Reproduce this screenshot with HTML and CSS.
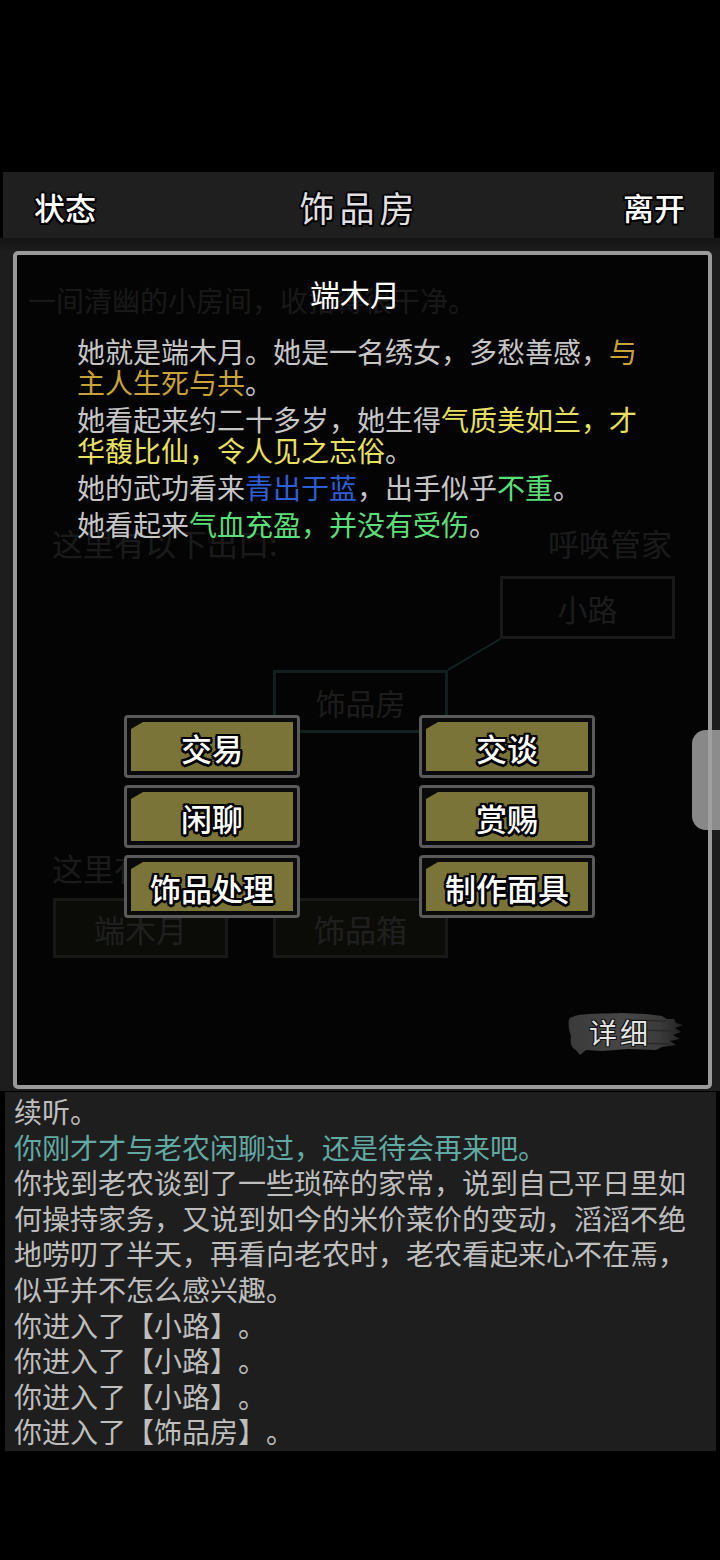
FILE: index.html
```html
<!DOCTYPE html>
<html lang="zh-CN">
<head>
<meta charset="utf-8">
<title>饰品房</title>
<link rel="stylesheet" href="styles.css">
</head>
<body>
<div class="screen">
  <header class="topbar">
    <span class="bar-btn">状态</span>
    <span class="bar-title">饰品房</span>
    <span class="bar-btn">离开</span>
  </header>

  <main class="main">
    <section class="scene">
      <p class="scene-desc">一间清幽的小房间，收拾得很干净。</p>
      <div class="scene-row exits-head">
        <span>这里有以下出口:</span>
        <span>呼唤管家</span>
      </div>
      <div class="map">
        <svg class="map-link" width="720" height="170" viewBox="0 0 720 170">
          <line x1="448" y1="107" x2="500" y2="76" stroke="#7ae8e0" stroke-width="2"/>
        </svg>
        <div class="node node-road">小路</div>
        <div class="node node-here">饰品房</div>
      </div>
      <div class="scene-row people-head">
        <span>这里有以下人物:</span>
      </div>
      <div class="people">
        <div class="person">端木月</div>
        <div class="person">饰品箱</div>
      </div>
    </section>

    <div class="dialog">
      <h1 class="dlg-title">端木月</h1>
      <div class="dlg-body">
        <p>她就是端木月。她是一名绣女，多愁善感，<span class="c-gold">与主人生死与共</span>。</p>
        <p>她看起来约二十多岁，她生得<span class="c-yellow">气质美如兰，才华馥比仙，令人见之忘俗</span>。</p>
        <p>她的武功看来<span class="c-blue">青出于蓝</span>，出手似乎<span class="c-green">不重</span>。</p>
        <p>她看起来<span class="c-green">气血充盈，并没有受伤</span>。</p>
      </div>
      <div class="actions">
        <button class="act"><span class="act-fill">交易</span></button>
        <button class="act"><span class="act-fill">交谈</span></button>
        <button class="act"><span class="act-fill">闲聊</span></button>
        <button class="act"><span class="act-fill">赏赐</span></button>
        <button class="act"><span class="act-fill">饰品处理</span></button>
        <button class="act"><span class="act-fill">制作面具</span></button>
      </div>
      <button class="detail">
        <svg class="brush" width="118" height="48" viewBox="0 0 118 48">
          <defs>
            <linearGradient id="ink" x1="0" y1="0" x2="1" y2="0">
              <stop offset="0" stop-color="#3a3a3a"/>
              <stop offset="0.5" stop-color="#474747"/>
              <stop offset="0.8" stop-color="#3a3a3a"/>
              <stop offset="1" stop-color="#222"/>
            </linearGradient>
          </defs>
          <path d="M3,9 C9,3 30,4 55,3 L80,4 L96,6 L101,9 L108,9 L110,13 L117,15 L109,18 L115,22 L107,25 L114,29 L104,31 L110,35 L96,37 L90,40 L62,39 L36,41 L20,40 L14,45 L10,40 C5,38 4,32 5,26 C3,20 2,14 3,9 Z" fill="url(#ink)"/>
          <path d="M60,10 L100,11 M66,33 L104,34 M70,20 L112,21" stroke="#2a2a2a" stroke-width="1.5" fill="none"/>
        </svg>
        <span class="detail-text">详细</span>
      </button>
    </div>

    <div class="edge-handle"></div>
  </main>

  <section class="log">
    <p>续听。</p>
    <p class="c-teal">你刚才才与老农闲聊过，还是待会再来吧。</p>
    <p>你找到老农谈到了一些琐碎的家常，说到自己平日里如何操持家务，又说到如今的米价菜价的变动，滔滔不绝地唠叨了半天，再看向老农时，老农看起来心不在焉，似乎并不怎么感兴趣。</p>
    <p>你进入了【小路】。</p>
    <p>你进入了【小路】。</p>
    <p>你进入了【小路】。</p>
    <p>你进入了【饰品房】。</p>
  </section>
</div>
</body>
</html>
```

FILE: styles.css
```css
* {
  box-sizing: border-box;
  margin: 0;
  padding: 0;
}

html,
body {
  background: #000;
}

body {
  width: 720px;
  height: 1560px;
  overflow: hidden;
  font-family: "Noto Sans CJK SC", "Noto Sans", sans-serif;
  text-spacing-trim: space-all;
}

.screen {
  padding-top: 172px;
}

/* ---------- top bar ---------- */
.topbar {
  margin-left: 3px;
  width: 711px;
  height: 66px;
  background: #1f1f1f;
  display: flex;
  align-items: center;
  justify-content: space-between;
  padding: 4px 29px 0 31px;
}

.bar-btn {
  font-size: 31px;
  line-height: 40px;
  font-weight: 500;
  color: #fff;
  text-shadow: 2px 0 0 #000, -2px 0 0 #000, 0 2px 0 #000, 0 -2px 0 #000,
    1.5px 1.5px 0 #000, -1.5px -1.5px 0 #000, 1.5px -1.5px 0 #000, -1.5px 1.5px 0 #000;
}

.bar-title {
  font-size: 35px;
  line-height: 40px;
  font-weight: 400;
  letter-spacing: 5px;
  color: #e0e0e0;
  text-shadow: 2px 0 0 #000, -2px 0 0 #000, 0 2px 0 #000, 0 -2px 0 #000,
    1.5px 1.5px 0 #000, -1.5px -1.5px 0 #000, 1.5px -1.5px 0 #000, -1.5px 1.5px 0 #000;
}

/* ---------- main area ---------- */
.main {
  position: relative;
  width: 720px;
  height: 853px;
  background: linear-gradient(#141414 0, #1d1d1d 14px, #1d1d1d 100%);
}

.scene {
  padding-top: 44px;
  color: #b0b0b0;
}

.scene-desc {
  padding-left: 28px;
  font-size: 28px;
  line-height: 36px;
  color: #a0a0a0;
}

.scene-row {
  display: flex;
  justify-content: space-between;
  padding: 0 48px 0 52px;
  font-size: 31px;
  line-height: 40px;
}

.exits-head {
  margin-top: 205px;
}

.map {
  position: relative;
  height: 170px;
}

.map-link {
  position: absolute;
  left: 0;
  top: 0;
}

.node {
  position: absolute;
  width: 175px;
  height: 63px;
  border: 3px solid #a8a8a8;
  display: flex;
  align-items: center;
  justify-content: center;
  font-size: 30px;
  color: #b8b8b8;
}

.node-road {
  left: 500px;
  top: 13px;
}

.node-here {
  left: 273px;
  top: 107px;
  border-color: #70d8d0;
}

.people-head {
  margin-top: 115px;
}

.people {
  display: flex;
  gap: 45px;
  margin-top: 10px;
  padding-left: 53px;
}

.person {
  width: 175px;
  height: 60px;
  border: 3px solid #a0a0a0;
  background: #4e4e30;
  display: flex;
  align-items: center;
  justify-content: center;
  font-size: 31px;
  color: #d0d0d0;
}

/* ---------- dialog overlay ---------- */
.dialog {
  position: absolute;
  left: 13px;
  top: 13px;
  width: 699px;
  height: 838px;
  border: 4px solid #9a9a9a;
  border-radius: 5px;
  background: rgba(0, 0, 0, 0.85);
  display: flex;
  flex-direction: column;
}

.dlg-title {
  padding: 18px 15px 0 0;
  text-align: center;
  font-size: 30px;
  line-height: 40px;
  font-weight: 400;
  color: #fff;
}

.dlg-body {
  margin-top: 23px;
  padding-left: 60px;
  width: 632px;
  font-size: 28px;
  line-height: 31px;
  color: #c6c6c6;
}

.dlg-body p {
  margin-bottom: 6px;
}

.c-gold {
  color: #c9a23a;
}

.c-yellow {
  color: #e8e060;
}

.c-blue {
  color: #2f5fd6;
}

.c-green {
  color: #5ade78;
}

.actions {
  margin-top: 169px;
  margin-left: 107px;
  display: grid;
  grid-template-columns: 176px 176px;
  grid-auto-rows: 63px;
  column-gap: 119px;
  row-gap: 7px;
}

.act {
  display: flex;
  padding: 4px;
  border: 3px solid #5a5a5a;
  border-radius: 4px;
  background: #0a0a0a;
  font-family: inherit;
}

.act-fill {
  flex: 1;
  display: flex;
  align-items: center;
  justify-content: center;
  background: #7a7438;
  clip-path: polygon(0 7px, 12px 0, 100% 0, 100% 100%, 0 100%);
  font-size: 31px;
  line-height: 1;
  font-weight: 500;
  color: #fff;
  padding-top: 2px;
  text-shadow: 2.5px 0 0 #000, -2.5px 0 0 #000, 0 2.5px 0 #000, 0 -2.5px 0 #000,
    2px 2px 0 #000, -2px -2px 0 #000, 2px -2px 0 #000, -2px 2px 0 #000;
}

.detail {
  position: relative;
  margin-top: auto;
  margin-right: 24px;
  margin-bottom: 27px;
  align-self: flex-end;
  width: 118px;
  height: 48px;
  border: 0;
  background: transparent;
  display: flex;
  align-items: center;
  justify-content: center;
  padding: 0 10px 4px 0;
  font-family: inherit;
}

.brush {
  position: absolute;
  left: 0;
  top: 0;
}

.detail-text {
  position: relative;
  font-size: 28px;
  line-height: 1;
  font-weight: 400;
  letter-spacing: 3px;
  color: #e4e4e4;
  text-shadow: 1px 1px 0 #111, -1px -1px 0 #111, 1px -1px 0 #111, -1px 1px 0 #111;
}

.edge-handle {
  position: absolute;
  right: 0;
  top: 492px;
  width: 28px;
  height: 100px;
  border-radius: 14px 0 0 14px;
  background: rgba(160, 160, 160, 0.85);
}

/* ---------- log ---------- */
.log {
  margin: 1px 0 0 5px;
  width: 711px;
  height: 359px;
  background: #1e1e1e;
  padding: 2px 0 0 9px;
  font-size: 28px;
  line-height: 35.6px;
  color: #bebebe;
}

.log p {
  width: 690px;
}

.c-teal {
  color: #62a9a4;
}
```
